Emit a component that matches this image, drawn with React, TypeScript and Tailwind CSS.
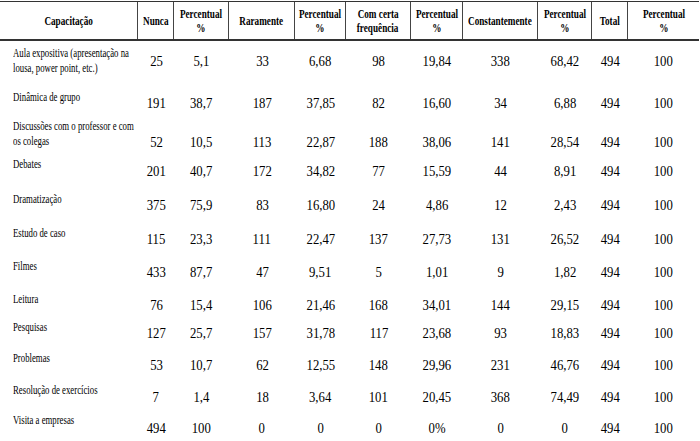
import React from "react";

const cols = [138, 36, 55, 66, 51, 65, 52, 75, 54, 36, 71];

type Row = {
  label: string[];
  vals: string[];
  h: number;
  lt: number;
  nt: number;
};

const rows: Row[] = [
  { label: ["Aula expositiva (apresentação na", "lousa, power point, etc.)"], vals: ["25", "5,1", "33", "6,68", "98", "19,84", "338", "68,42", "494", "100"], h: 45, lt: 3, nt: 10 },
  { label: ["Dinâmica de grupo"], vals: ["191", "38,7", "187", "37,85", "82", "16,60", "34", "6,88", "494", "100"], h: 28, lt: 2, nt: 7 },
  { label: ["Discussões com o professor e com", "os colegas"], vals: ["52", "10,5", "113", "22,87", "188", "38,06", "141", "28,54", "494", "100"], h: 38, lt: 3, nt: 18 },
  { label: ["Debates"], vals: ["201", "40,7", "172", "34,82", "77", "15,59", "44", "8,91", "494", "100"], h: 35, lt: 3, nt: 9 },
  { label: ["Dramatização"], vals: ["375", "75,9", "83", "16,80", "24", "4,86", "12", "2,43", "494", "100"], h: 34, lt: 3, nt: 8 },
  { label: ["Estudo de caso"], vals: ["115", "23,3", "111", "22,47", "137", "27,73", "131", "26,52", "494", "100"], h: 33, lt: 3, nt: 8 },
  { label: ["Filmes"], vals: ["433", "87,7", "47", "9,51", "5", "1,01", "9", "1,82", "494", "100"], h: 33, lt: 3, nt: 8 },
  { label: ["Leitura"], vals: ["76", "15,4", "106", "21,46", "168", "34,01", "144", "29,15", "494", "100"], h: 28, lt: 3, nt: 8 },
  { label: ["Pesquisas"], vals: ["127", "25,7", "157", "31,78", "117", "23,68", "93", "18,83", "494", "100"], h: 32, lt: 3, nt: 8 },
  { label: ["Problemas"], vals: ["53", "10,7", "62", "12,55", "148", "29,96", "231", "46,76", "494", "100"], h: 32, lt: 2, nt: 8 },
  { label: ["Resolução de exercícios"], vals: ["7", "1,4", "18", "3,64", "101", "20,45", "368", "74,49", "494", "100"], h: 31, lt: 2, nt: 8 },
  { label: ["Visita a empresas"], vals: ["494", "100", "0", "0", "0", "0%", "0", "0", "494", "100"], h: 32, lt: 1, nt: 8 },
];

const headers: string[][] = [
  ["Capacitação"],
  ["Nunca"],
  ["Percentual", "%"],
  ["Raramente"],
  ["Percentual", "%"],
  ["Com certa", "frequência"],
  ["Percentual", "%"],
  ["Constantemente"],
  ["Percentual", "%"],
  ["Total"],
  ["Percentual", "%"],
];

const ticks = [137, 175, 230, 283, 375, 410, 465, 483, 538, 565, 593, 635, 653];

export default function App() {
  return (
    <div className="w-[700px] h-[441px] bg-white text-black overflow-hidden font-['Liberation_Serif','Times_New_Roman',serif]">
      <div className="w-[699px] border-t border-[#333] mt-px">
        <div className="flex h-[39px] border-b-2 border-[#333]">
          {headers.map((h, i) => (
            <div
              key={i}
              style={{ width: cols[i] }}
              className={`flex flex-col items-center justify-center shrink-0 ${i < headers.length - 1 ? "border-r border-[#444]" : ""}`}
            >
              {h.map((t, j) => (
                <span key={j} className="inline-block whitespace-nowrap text-[13.5px] leading-[14px] font-bold scale-x-[0.68] origin-center">
                  {t}
                </span>
              ))}
            </div>
          ))}
        </div>
        <div className="flex flex-col pt-[2px]">
          {rows.map((r, ri) => (
            <div key={ri} className="flex" style={{ height: r.h }}>
              <div className="shrink-0 pl-[13px] flex flex-col" style={{ width: cols[0], paddingTop: r.lt }}>
                {r.label.map((l, li) => (
                  <span key={li} className="block whitespace-nowrap text-[12.5px] leading-[15px] scale-x-[0.7] origin-left">
                    {l}
                  </span>
                ))}
              </div>
              {r.vals.map((v, vi) => (
                <div key={vi} className="shrink-0 flex justify-center" style={{ width: cols[vi + 1], paddingTop: r.nt }}>
                  <span className="inline-block whitespace-nowrap text-[15px] leading-[17px] scale-x-[0.85] origin-center">{v}</span>
                </div>
              ))}
            </div>
          ))}
        </div>
        <div className="relative border-t border-[#333] h-[4px]">
          {ticks.map((t, i) => (
            <div key={i} className="absolute top-0 w-px h-[4px] bg-[#555]" style={{ left: t }} />
          ))}
        </div>
      </div>
    </div>
  );
}
